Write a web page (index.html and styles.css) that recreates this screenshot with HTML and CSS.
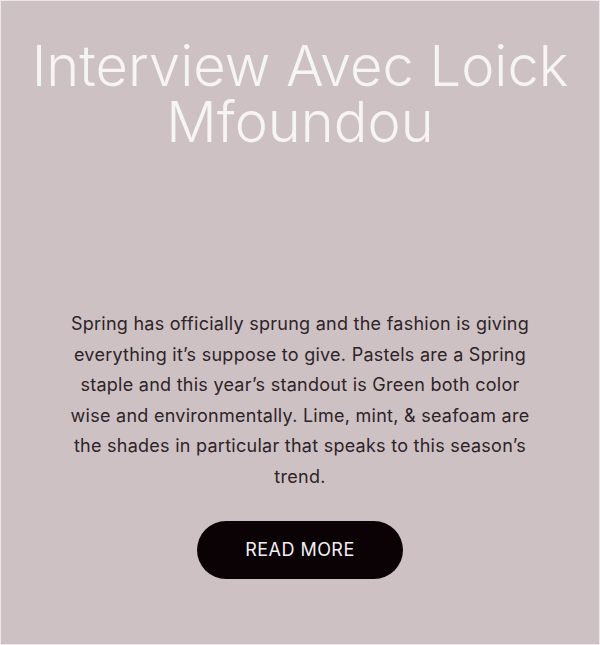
FILE: index.html
```html
<!DOCTYPE html>
<html lang="en">
<head>
<meta charset="utf-8">
<title>Interview Avec Loick Mfoundou</title>
<link rel="stylesheet" href="styles.css">
</head>
<body>
<section class="card">
  <h1 class="title">Interview Avec Loick Mfoundou</h1>
  <p class="excerpt">Spring has officially sprung and the fashion is giving everything it’s suppose to give. Pastels are a Spring  staple and this year’s standout is Green both color wise and environmentally. Lime, mint, &amp; seafoam are the shades in particular that speaks to this season’s trend.</p>
  <a class="btn" href="#">READ MORE</a>
</section>
</body>
</html>
```
FILE: styles.css
```css
html, body {
  margin: 0;
  padding: 0;
}
body {
  background: #ece8ea;
  font-family: Inter, "Noto Sans", sans-serif;
}
.card {
  box-sizing: border-box;
  width: 598px;
  height: 643px;
  margin: 1px;
  background: #cdc1c4;
  display: flex;
  flex-direction: column;
  align-items: center;
  padding-top: 37px;
}
.title {
  margin: 0;
  width: 560px;
  text-align: center;
  font-weight: 300;
  font-size: 56px;
  line-height: 56px;
  color: #f6f4f4;
}
.excerpt {
  margin: 159px 0 0;
  width: 464px;
  text-align: center;
  font-size: 18px;
  line-height: 1.7;
  letter-spacing: 0.26px;
  color: #2d2428;
}
.btn {
  margin-top: 28px;
  width: 206px;
  height: 58px;
  border-radius: 29px;
  background: #0a0204;
  color: #f4f0f1;
  font-size: 18px;
  letter-spacing: 0.45px;
  text-decoration: none;
  display: flex;
  align-items: center;
  justify-content: center;
}
```
